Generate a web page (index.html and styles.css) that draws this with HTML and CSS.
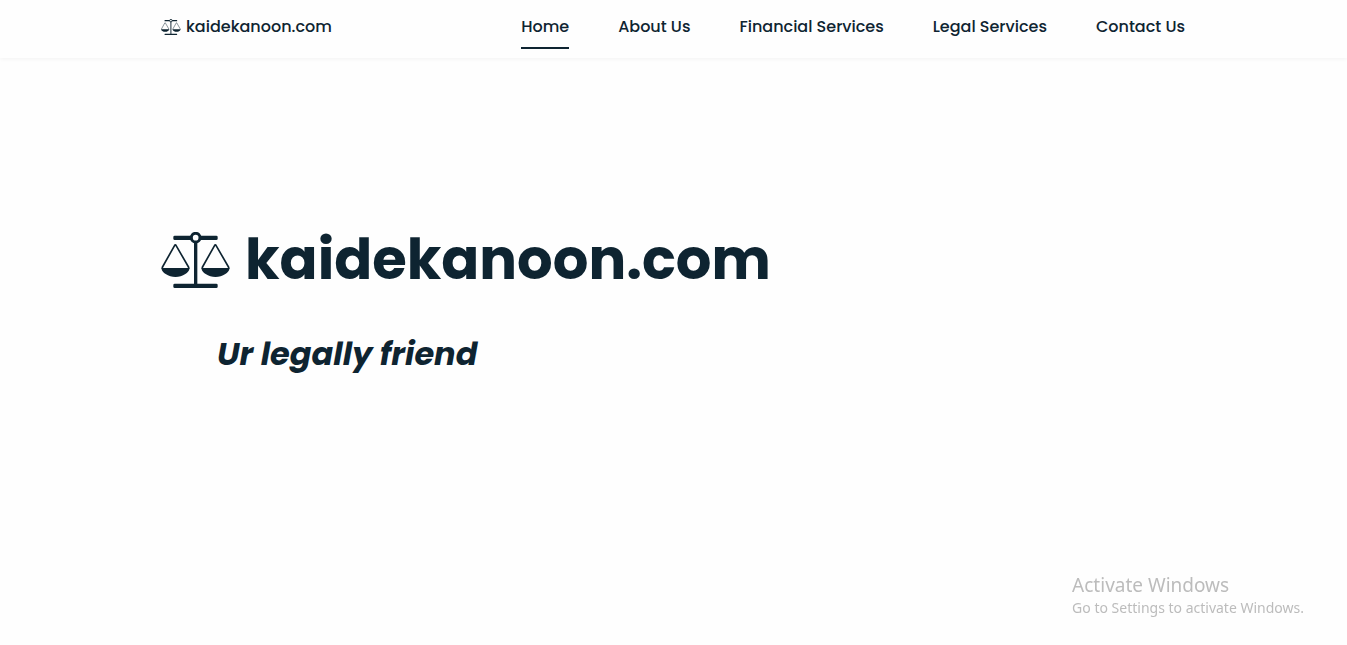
FILE: index.html
```html
<!DOCTYPE html>
<html lang="en">
<head>
<meta charset="utf-8">
<meta name="viewport" content="width=device-width, initial-scale=1">
<title>kaidekanoon.com</title>
<link rel="stylesheet" href="styles.css">
</head>
<body>
<svg class="sprite" aria-hidden="true">
  <symbol id="scales" viewBox="33 36 210 168">
    <rect x="70" y="47" width="133" height="13" rx="4"/>
    <rect x="70" y="191" width="133" height="13" rx="4"/>
    <path d="M132 66h10v128h-10z"/>
    <circle class="ring" cx="137" cy="53" r="13"/>
    <path class="wire" d="M37 147v-5L74 76q2-3 4 0l38 66v5"/>
    <path d="M35 144h83c1 9-6 14-12 18-17 12-42 12-59 0-6-4-13-9-12-18z"/>
    <path class="wire" d="M157 147v-5L194 76q2-3 4 0l38 66v5"/>
    <path d="M155 144h83c1 9-6 14-12 18-17 12-42 12-59 0-6-4-13-9-12-18z"/>
  </symbol>
</svg>
<header class="header">
  <div class="container bar">
    <a class="brand" href="#"><svg class="brand-icon" aria-hidden="true"><use href="#scales"/></svg>kaidekanoon.com</a>
    <nav class="nav">
      <a class="link active" href="#" aria-current="page">Home</a>
      <a class="link" href="#">About Us</a>
      <a class="link" href="#">Financial Services</a>
      <a class="link" href="#">Legal Services</a>
      <a class="link" href="#">Contact Us</a>
    </nav>
  </div>
</header>
<main class="container hero">
  <h1 class="title"><svg class="title-icon" aria-hidden="true"><use href="#scales"/></svg>kaidekanoon.com</h1>
  <h2 class="tagline">Ur legally friend</h2>
</main>
<aside class="notice">
  <p class="notice-title">Activate Windows</p>
  <p class="notice-text">Go to Settings to activate Windows.</p>
</aside>
</body>
</html>
```
FILE: styles.css
```css
* { box-sizing: border-box; }
body {
  margin: 0;
  background: #fefefe;
  color: #0e2431;
  font-family: Poppins, Inter, sans-serif;
}
.sprite { position: absolute; width: 0; height: 0; }
svg { fill: currentColor; flex: none; }
.ring { fill: #fefefe; stroke: currentColor; stroke-width: 9; }
.wire { fill: none; stroke: currentColor; stroke-width: 5; }
.container { width: 100%; max-width: 1073px; margin: 0 auto; padding: 0 25px 0 24px; }
.header { box-shadow: 0 1px 4px rgba(0, 0, 0, 0.05); }
.bar {
  display: flex;
  align-items: flex-start;
  justify-content: space-between;
  padding-top: 6px;
  padding-bottom: 9px;
}
a { color: inherit; text-decoration: none; }
.brand {
  display: flex;
  align-items: center;
  gap: 5px;
  font-size: 16px;
  font-weight: 500;
  line-height: 41px;
}
.brand-icon { width: 20px; height: 16px; }
.nav { display: flex; gap: 49px; }
.link {
  font-size: 16px;
  font-weight: 500;
  line-height: 41px;
  border-bottom: 2px solid transparent;
}
.active { border-color: currentColor; }
.hero { padding-top: 160px; }
.title {
  display: flex;
  align-items: center;
  gap: 14px;
  margin: 0;
  font-size: 56px;
  font-weight: 700;
  line-height: 84px;
}
.title-icon { width: 70px; height: 56px; }
.tagline {
  margin: 28px 0 0 56px;
  font-size: 32px;
  font-style: italic;
  font-weight: 700;
  line-height: 48px;
}
.notice {
  position: fixed;
  right: 43px;
  bottom: 26px;
  color: #bcbcbc;
  font-family: "Segoe UI", "Noto Sans", sans-serif;
}
.notice p { margin: 0; }
.notice-title { font-size: 19px; line-height: 24px; }
.notice-text { font-size: 14px; line-height: 22px; }
```
